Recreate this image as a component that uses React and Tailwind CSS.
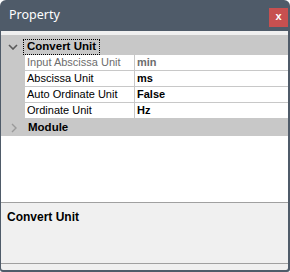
import React from "react";

const rows = [
  { label: "Input Abscissa Unit", value: "min", disabled: true },
  { label: "Abscissa Unit", value: "ms" },
  { label: "Auto Ordinate Unit", value: "False" },
  { label: "Ordinate Unit", value: "Hz" },
];

function Chevron({ open }) {
  return open ? (
    <svg width="10" height="6" viewBox="0 0 10 6" className="block">
      <path d="M1 1 L5 5 L9 1" fill="none" stroke="#5a5a5a" strokeWidth="1.6" />
    </svg>
  ) : (
    <svg width="6" height="10" viewBox="0 0 6 10" className="block">
      <path d="M1 1 L5 5 L1 9" fill="none" stroke="#9a9a9a" strokeWidth="1.4" />
    </svg>
  );
}

export default function App() {
  const font = { fontFamily: '"Liberation Sans", Arial, sans-serif' };
  return (
    <div
      className="w-[290px] h-[272px] bg-[#4f5b69] rounded-t-[6px] rounded-b-[3px] flex flex-col pl-[1px] pr-[2px] pb-[2px] overflow-hidden"
      style={font}
    >
      {/* title bar */}
      <div className="h-[31px] shrink-0 flex items-start justify-between">
        <div className="pl-[8px] pt-[7px] text-[12.5px] text-white leading-[16px]" style={{ fontFamily: '"Noto Sans", "Liberation Sans", sans-serif' }}>
          Property
        </div>
        <div className="mt-[8px] mr-[0px] w-[19px] h-[19px] bg-[#c75050] flex items-center justify-center text-white text-[11px] font-bold leading-none pb-[2px]">
          x
        </div>
      </div>

      {/* content */}
      <div className="flex-1 bg-[#f0f0f0] flex flex-col pt-[4px] rounded-b-[2px]">
        {/* grid */}
        <div className="h-[167px] bg-white flex flex-col shrink-0">
          {/* category */}
          <div className="h-[20px] bg-[#c8c8c8] flex items-center">
            <div className="w-[22px] flex justify-center pl-[1px] pt-[3px]">
              <Chevron open />
            </div>
            <div className="ml-[0px] mt-[3px] h-[16px] border border-dotted border-black px-[3px] flex items-center text-[11.5px] font-bold text-black leading-none">
              Convert Unit
            </div>
          </div>
          {rows.map((r) => (
            <div key={r.label} className="h-[16px] flex">
              <div className="w-[24px] bg-[#c8c8c8] shrink-0" />
              <div className="w-[110px] shrink-0 border-b border-[#c8c8c8] border-r flex items-center pl-[2px] text-[11px] leading-none">
                <span className={r.disabled ? "text-[#6d6d6d]" : "text-black"}>{r.label}</span>
              </div>
              <div className="flex-1 border-b border-[#c8c8c8] flex items-center pl-[2px] text-[11px] font-bold leading-none">
                <span className={r.disabled ? "text-[#6d6d6d]" : "text-black"}>{r.value}</span>
              </div>
            </div>
          ))}
          <div className="h-[17px] bg-[#c8c8c8] flex items-center">
            <div className="w-[24px] flex justify-center pl-[1px]">
              <Chevron />
            </div>
            <div className="pl-[3px] text-[11.5px] font-bold text-black leading-none">Module</div>
          </div>
          <div className="flex-1 bg-white" />
        </div>

        {/* description */}
        <div className="h-[62px] shrink-0 border-t border-b border-[#a0a0a0] bg-[#f0f0f0] pl-[6px] pt-[7px]">
          <div className="text-[12px] font-bold text-black leading-[14px]">Convert Unit</div>
        </div>
        <div className="flex-1" />
      </div>
    </div>
  );
}
